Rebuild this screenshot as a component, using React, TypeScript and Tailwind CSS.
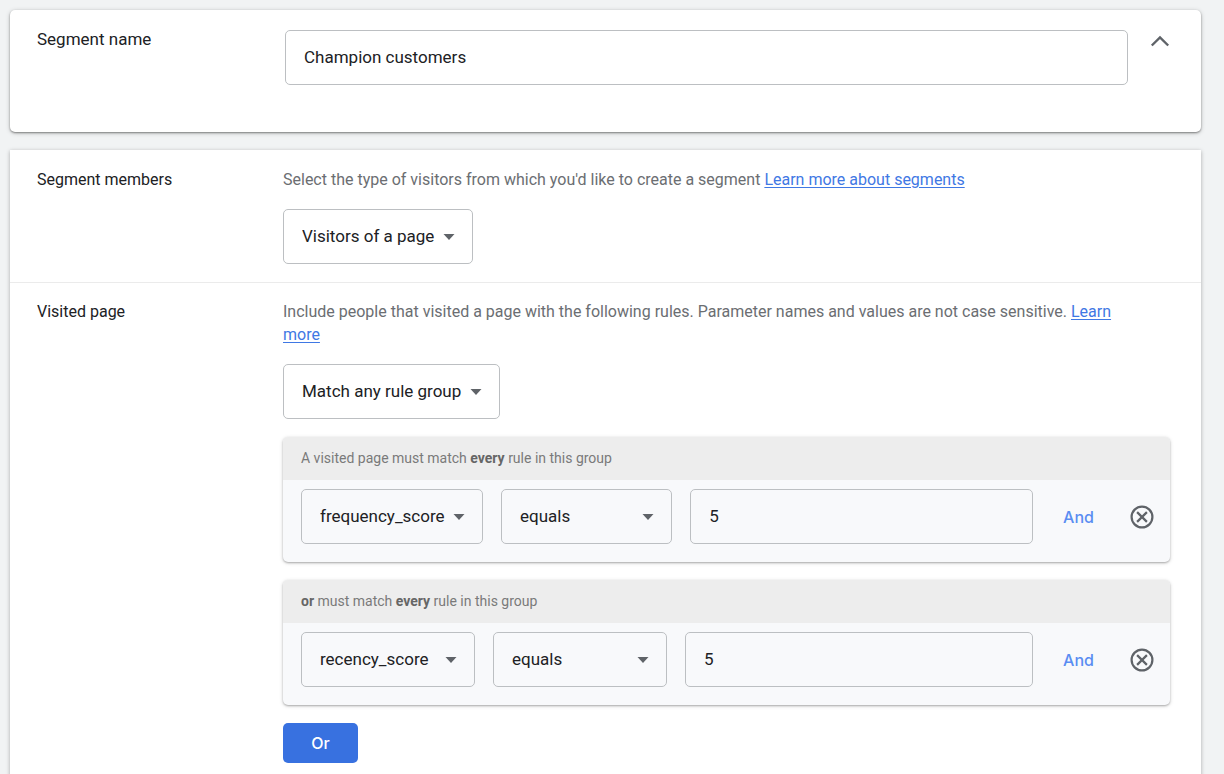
import { useState, type SelectHTMLAttributes } from "react";

type Rule = {
  id: string;
  parameter: string;
  operator: string;
  value: string;
};

const initialRules: Rule[] = [
  { id: "frequency", parameter: "frequency_score", operator: "equals", value: "5" },
  { id: "recency", parameter: "recency_score", operator: "equals", value: "5" },
];

const fieldClass =
  "h-[55px] rounded-[5px] border border-[#bcbfc2] bg-transparent text-[17px] text-[#202124] outline-none focus:border-[#3871e0]";

type SelectProps = SelectHTMLAttributes<HTMLSelectElement> & {
  label: string;
  options: string[];
};

function Select({ label, options, ...props }: SelectProps) {
  return (
    <div className="relative flex">
      <select
        aria-label={label}
        className={`${fieldClass} grow cursor-pointer appearance-none pr-[37px] pl-[18px]`}
        {...props}
      >
        {options.map((option) => (
          <option key={option}>{option}</option>
        ))}
      </select>
      <svg
        viewBox="0 0 12 6"
        className="pointer-events-none absolute top-1/2 right-[18px] h-[6px] w-[12px] -translate-y-1/2 fill-[#5f6368]"
        aria-hidden="true"
      >
        <path d="M0.5 0h11L6 6z" />
      </svg>
    </div>
  );
}

function RuleGroup({ rule, first, onChange }: { rule: Rule; first: boolean; onChange: (value: string) => void }) {
  return (
    <div className="mt-[18px] overflow-hidden rounded-[5px] bg-[#f8f9fb] shadow-[0_1px_2px_rgba(0,0,0,0.25),0_1px_4px_rgba(0,0,0,0.15)]">
      <p className="bg-[#ededed] px-[18px] py-[10px] text-sm leading-[23px] text-[#7a7a7a]">
        {first ? "A visited page" : <b className="font-bold text-[#666]">or</b>} must match{" "}
        <b className="font-bold text-[#666]">every</b> rule in this group
      </p>
      <div className="flex items-center pt-[9px] pr-4 pb-[18px] pl-[18px]">
        <div className="grid min-w-0 flex-1 grid-cols-[1fr_1fr_2fr] gap-[18px]">
          <Select label="Parameter" options={[rule.parameter]} />
          <Select label="Operator" options={[rule.operator]} />
          <input
            aria-label="Value"
            className={`${fieldClass} min-w-0 px-[18px] pb-[2px]`}
            value={rule.value}
            onChange={(event) => onChange(event.target.value)}
          />
        </div>
        <button
          type="button"
          className="w-[91px] shrink-0 font-[Inter,sans-serif] text-base font-medium text-[#5a8df2]"
        >
          And
        </button>
        <button type="button" aria-label="Remove rule" className="ml-[6px] shrink-0">
          <svg
            viewBox="0 0 24 24"
            className="size-6 fill-none stroke-[#5f6368] stroke-[2.2]"
            aria-hidden="true"
          >
            <circle cx="12" cy="12" r="10.4" />
            <path d="M7.1 7.1l9.8 9.8M16.9 7.1l-9.8 9.8" />
          </svg>
        </button>
      </div>
    </div>
  );
}

export default function App() {
  const [name, setName] = useState("Champion customers");
  const [rules, setRules] = useState(initialRules);

  const updateValue = (id: string, value: string) => {
    setRules((current) => current.map((rule) => (rule.id === id ? { ...rule, value } : rule)));
  };

  return (
    <main className="min-h-screen bg-[#f1f3f4] pt-[10px] pr-[23px] pl-[10px] font-[Roboto,sans-serif] text-[#202124]">
      <section className="flex items-start rounded-[5px] bg-white pt-5 pr-[29px] pb-[47px] pl-[27px] shadow-[0_1px_2px_rgba(0,0,0,0.4),0_1px_5px_rgba(0,0,0,0.2)]">
        <label htmlFor="segment-name" className="w-[248px] shrink-0 text-[17px] leading-[18px]">
          Segment name
        </label>
        <input
          id="segment-name"
          className={`${fieldClass} min-w-0 flex-1 px-[18px] pb-[2px]`}
          value={name}
          onChange={(event) => setName(event.target.value)}
        />
        <button type="button" aria-label="Collapse segment name" className="ml-5">
          <svg viewBox="0 0 24 24" className="size-6 fill-none stroke-[#5f6368] stroke-[2.4]" aria-hidden="true">
            <path d="M3.8 15.5L12 7.4l8.2 8.1" />
          </svg>
        </button>
      </section>

      <div className="mt-[18px] bg-white shadow-[0_1px_4px_rgba(0,0,0,0.3)]">
        <section className="flex items-start py-[18px] pr-[31px] pl-[27px]">
          <h2 className="w-[246px] shrink-0 text-base leading-[23px]">Segment members</h2>
          <div className="min-w-0 flex-1">
            <p className="text-base leading-[23px] text-[#6b6e72]">
              Select the type of visitors from which you'd like to create a segment{" "}
              <a href="#segments" className="text-[#3f78e4] underline underline-offset-2">
                Learn more about segments
              </a>
            </p>
            <div className="mt-[18px] flex">
              <Select label="Segment members" options={["Visitors of a page"]} />
            </div>
          </div>
        </section>

        <section className="flex items-start border-t border-[#ebebeb] pt-[17px] pr-[31px] pb-10 pl-[27px]">
          <h2 className="w-[246px] shrink-0 text-base leading-[23px]">Visited page</h2>
          <div className="min-w-0 flex-1">
            <p className="max-w-[860px] text-base leading-[23px] text-[#6b6e72]">
              Include people that visited a page with the following rules. Parameter names and values are not case
              sensitive.{" "}
              <a href="#rules" className="text-[#3f78e4] underline underline-offset-2">
                Learn more
              </a>
            </p>
            <div className="mt-[18px] flex">
              <Select label="Rule group matching" options={["Match any rule group"]} />
            </div>

            {rules.map((rule, index) => (
              <RuleGroup
                key={rule.id}
                rule={rule}
                first={index === 0}
                onChange={(value) => updateValue(rule.id, value)}
              />
            ))}

            <button
              type="button"
              className="mt-[18px] h-10 w-[75px] rounded-[5px] bg-[#3871e0] font-[Inter,sans-serif] text-base font-medium text-white"
            >
              Or
            </button>
          </div>
        </section>
      </div>
    </main>
  );
}
